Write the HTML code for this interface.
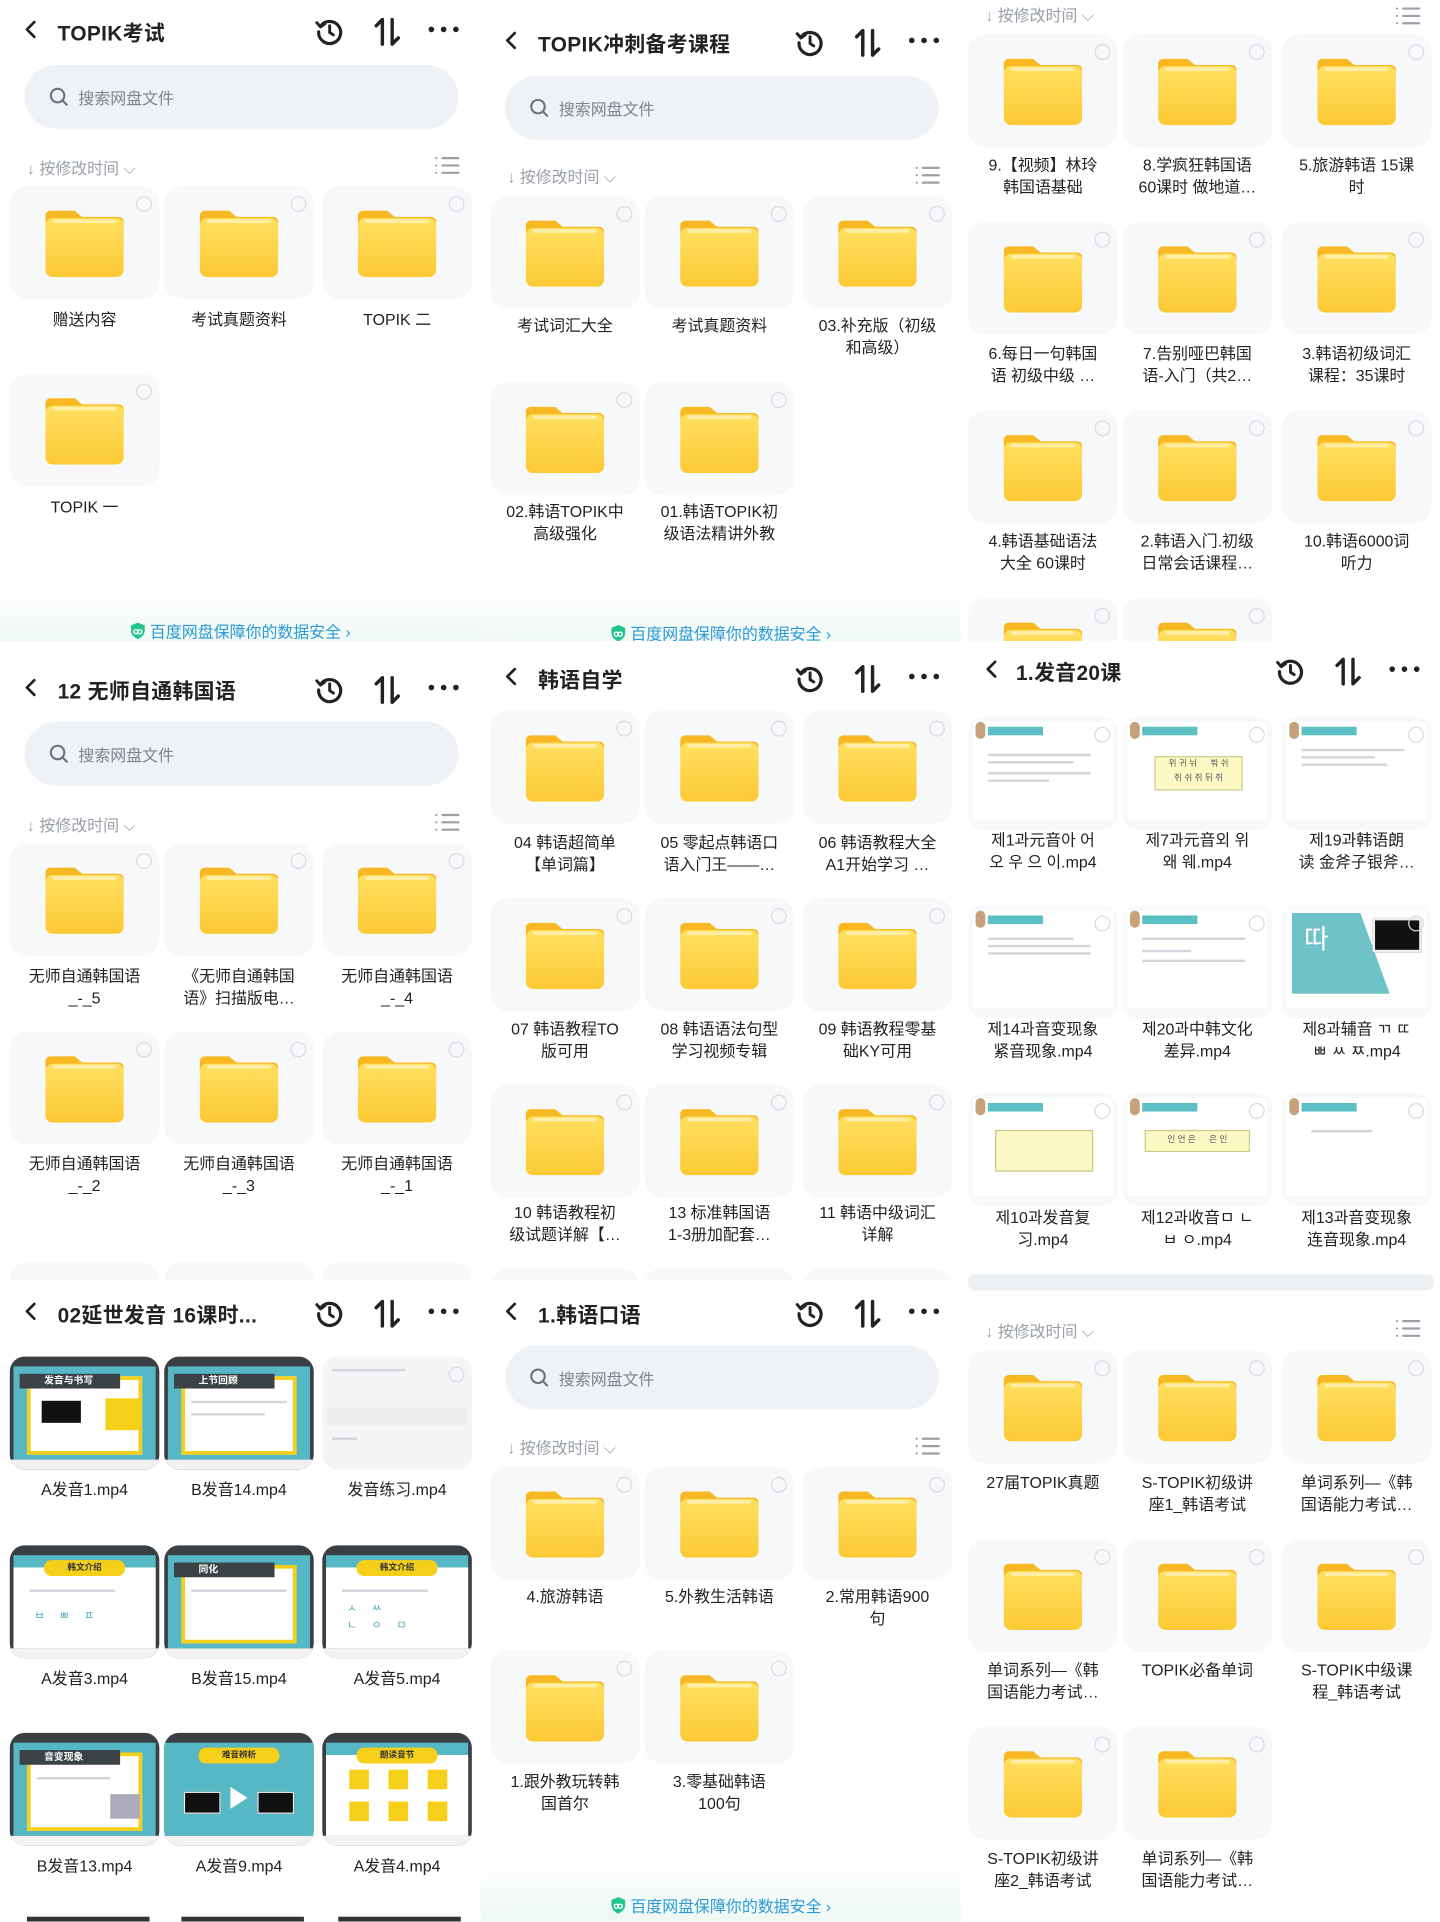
<!DOCTYPE html>
<html><head><meta charset="utf-8">
<style>
*{margin:0;padding:0;box-sizing:border-box}
html,body{width:1440px;height:1920px;overflow:hidden;background:#fff}
body{font-family:"Liberation Sans","Noto Sans CJK SC",sans-serif;color:#222}
#w{position:absolute;left:0;top:0;width:1175px;height:1567px;transform:scale(1.22553);transform-origin:0 0}
.p{position:absolute;width:392px;height:523px;overflow:hidden;background:#fff}
.a{position:absolute}
.hd{position:absolute;left:0;width:392px;height:30px}
.hd .bk{position:absolute;left:18px;top:6px}
.hd .tt{position:absolute;left:47px;top:3px;font-size:17px;font-weight:bold;color:#222;white-space:nowrap;letter-spacing:.3px}
.hd .i1{position:absolute;left:256px;top:3px}
.hd .i2{position:absolute;left:304px;top:3px}
.hd .i3{position:absolute;left:349px;top:11px}
.sr{position:absolute;left:20px;width:354px;height:52px;border-radius:26px;background:#eef1f5}
.sr svg{position:absolute;left:20px;top:18px}
.sr span{position:absolute;left:44px;top:17px;font-size:13px;color:#7d838c}
.so{position:absolute;left:22px;font-size:13px;color:#9aa0a8;white-space:nowrap}
.li{position:absolute;left:355px}
.t{position:absolute;width:122px;height:92px;border-radius:14px;background:#f6f8fa}
.t svg.f{position:absolute;left:29px;top:18px}
.t i{position:absolute;right:6px;top:8px;width:13px;height:13px;border:1.3px solid #d7dbe0;border-radius:50%}
.l{position:absolute;width:142px;text-align:center;font-size:13px;line-height:17.5px;color:#222}
.ft{position:absolute;left:0;width:392px;height:50px;background:linear-gradient(#fff,#eef8f3)}
.ft div{position:absolute;left:0;width:392px;text-align:center;font-size:13px;color:#2c9ad6;bottom:4px}
.v{position:absolute;width:122px;height:92px;border-radius:12px;background:#fff;overflow:hidden}
.v i{position:absolute;right:6px;top:8px;width:13px;height:13px;border:1.3px solid #d7dbe0;border-radius:50%}
.tag{position:absolute;left:16px;top:8px;width:45px;height:7px;background:#5cbfc4}
.av{position:absolute;left:6px;top:4px;width:8px;height:14px;border-radius:4px;background:#c7a17a}
.tx{position:absolute;height:2px;background:#d3d6dc}
.k{position:absolute;width:122px;height:92px;border-radius:12px;overflow:hidden;background:#3a3f44}
.k .in{position:absolute;left:3px;top:8px;right:3px;bottom:8px;background:#56b8c4}
.k .wh{position:absolute;left:14px;top:16px;right:14px;bottom:12px;background:#fff;border:3px solid #f6cf1a}
.k .bn{position:absolute;left:8px;top:14px;width:82px;height:12px;background:#3b4245;color:#fff;font-size:8px;font-weight:bold;padding-left:20px;line-height:12px}
.k .yb{position:absolute;left:28px;top:12px;width:66px;height:13px;background:#f6cf1a;border-radius:6px;color:#333;font-size:7px;font-weight:bold;text-align:center;line-height:13px}
.k .bot{position:absolute;left:0;right:0;bottom:0;height:8px;background:#f2f2f2}
</style></head><body>
<svg width="0" height="0" style="position:absolute">
<defs>
<linearGradient id="gf" x1="0" y1="0" x2="0" y2="1"><stop offset="0" stop-color="#ffe061"/><stop offset="1" stop-color="#fcc934"/></linearGradient>
<symbol id="fo" viewBox="0 0 64 56"><path d="M4 2h20l6 5h30a4 4 0 0 1 4 4v6H0V6a4 4 0 0 1 4-4z" fill="#f8b824"/><rect x="0" y="8" width="64" height="48" rx="6" fill="url(#gf)"/><rect x="6" y="9" width="52" height="3" rx="1.5" fill="#fff3b8" opacity=".8"/></symbol>
<symbol id="bk" viewBox="0 0 14 16"><path d="M10 2L4 8l6 6" stroke="#222" stroke-width="2.2" fill="none" stroke-linecap="round" stroke-linejoin="round"/></symbol>
<symbol id="hi" viewBox="0 0 26 26"><path d="M5.5 8.5A9 9 0 1 1 4 13" stroke="#222" stroke-width="2.6" fill="none" stroke-linecap="round"/><path d="M2.5 5.5l3 3.5 3.5-2.5" stroke="#222" stroke-width="2.4" fill="none" stroke-linecap="round" stroke-linejoin="round"/><path d="M13 8v5.5l3 2" stroke="#222" stroke-width="2.4" fill="none" stroke-linecap="round"/></symbol>
<symbol id="so" viewBox="0 0 24 26"><path d="M8 23V3L3 8" stroke="#222" stroke-width="2.8" fill="none" stroke-linecap="round" stroke-linejoin="round"/><path d="M16 3v20l5-5" stroke="#222" stroke-width="2.8" fill="none" stroke-linecap="round" stroke-linejoin="round"/></symbol>
<symbol id="dt" viewBox="0 0 26 6"><circle cx="3" cy="3" r="2.3" fill="#222"/><circle cx="13" cy="3" r="2.3" fill="#222"/><circle cx="23" cy="3" r="2.3" fill="#222"/></symbol>
<symbol id="sq" viewBox="0 0 16 16"><circle cx="7" cy="7" r="5.5" stroke="#6b717a" stroke-width="1.7" fill="none"/><path d="M11 11l3.5 3.5" stroke="#6b717a" stroke-width="1.7" stroke-linecap="round"/></symbol>
<symbol id="ls" viewBox="0 0 20 16"><g stroke="#9aa0a8" stroke-width="1.8" stroke-linecap="round"><path d="M1 2h0M6 2h13M1 8h0M6 8h13M1 14h0M6 14h13"/></g></symbol>
<symbol id="sh" viewBox="0 0 14 16"><path d="M7 1l6 2.5v4.5c0 3.5-2.7 6-6 7.5C3.7 14 1 11.5 1 8V3.5z" fill="#21c48a"/><circle cx="5.3" cy="9" r="1.8" fill="none" stroke="#fff" stroke-width="1.2"/><circle cx="8.7" cy="9" r="1.8" fill="none" stroke="#fff" stroke-width="1.2"/></symbol>
</defs></svg>

<div id="w">

<!-- Panel 1 -->
<div class="p" style="left:0;top:0">
 <div class="hd" style="top:10px"><svg class="bk" width="14" height="16"><use href="#bk"/></svg><div class="tt">TOPIK考试</div><svg class="i1" width="26" height="26"><use href="#hi"/></svg><svg class="i2" width="24" height="26"><use href="#so"/></svg><svg class="i3" width="26" height="6"><use href="#dt"/></svg></div>
 <div class="sr" style="top:53px"><svg width="16" height="16"><use href="#sq"/></svg><span>搜索网盘文件</span></div>
 <div class="so" style="top:127px">↓ 按修改时间 ⌵</div><svg class="li" style="top:127px" width="20" height="16"><use href="#ls"/></svg>
 <div class="t" style="left:8px;top:152px"><svg class="f" width="64" height="56"><use href="#fo"/></svg><i></i></div>
 <div class="t" style="left:134px;top:152px"><svg class="f" width="64" height="56"><use href="#fo"/></svg><i></i></div>
 <div class="t" style="left:263px;top:152px"><svg class="f" width="64" height="56"><use href="#fo"/></svg><i></i></div>
 <div class="l" style="left:-2px;top:252px">赠送内容</div>
 <div class="l" style="left:124px;top:252px">考试真题资料</div>
 <div class="l" style="left:253px;top:252px">TOPIK 二</div>
 <div class="t" style="left:8px;top:305px"><svg class="f" width="64" height="56"><use href="#fo"/></svg><i></i></div>
 <div class="l" style="left:-2px;top:405px">TOPIK 一</div>
 <div class="ft" style="top:478px"><div><svg width="13" height="15" style="vertical-align:-2px"><use href="#sh"/></svg> 百度网盘保障你的数据安全 ›</div></div>
</div>

<!-- Panel 2 -->
<div class="p" style="left:392px;top:0">
 <div class="hd" style="top:19px"><svg class="bk" width="14" height="16"><use href="#bk"/></svg><div class="tt">TOPIK冲刺备考课程</div><svg class="i1" width="26" height="26"><use href="#hi"/></svg><svg class="i2" width="24" height="26"><use href="#so"/></svg><svg class="i3" width="26" height="6"><use href="#dt"/></svg></div>
 <div class="sr" style="top:62px"><svg width="16" height="16"><use href="#sq"/></svg><span>搜索网盘文件</span></div>
 <div class="so" style="top:134px">↓ 按修改时间 ⌵</div><svg class="li" style="top:135px" width="20" height="16"><use href="#ls"/></svg>
 <div class="t" style="left:8px;top:160px"><svg class="f" width="64" height="56"><use href="#fo"/></svg><i></i></div>
 <div class="t" style="left:134px;top:160px"><svg class="f" width="64" height="56"><use href="#fo"/></svg><i></i></div>
 <div class="t" style="left:263px;top:160px"><svg class="f" width="64" height="56"><use href="#fo"/></svg><i></i></div>
 <div class="l" style="left:-2px;top:257px">考试词汇大全</div>
 <div class="l" style="left:124px;top:257px">考试真题资料</div>
 <div class="l" style="left:253px;top:257px">03.补充版（初级<br>和高级）</div>
 <div class="t" style="left:8px;top:312px"><svg class="f" width="64" height="56"><use href="#fo"/></svg><i></i></div>
 <div class="t" style="left:134px;top:312px"><svg class="f" width="64" height="56"><use href="#fo"/></svg><i></i></div>
 <div class="l" style="left:-2px;top:409px">02.韩语TOPIK中<br>高级强化</div>
 <div class="l" style="left:124px;top:409px">01.韩语TOPIK初<br>级语法精讲外教</div>
 <div class="ft" style="top:480px"><div><svg width="13" height="15" style="vertical-align:-2px"><use href="#sh"/></svg> 百度网盘保障你的数据安全 ›</div></div>
</div>

<!-- Panel 3 -->
<div class="p" style="left:784px;top:0;width:391px">
 <div class="so" style="top:2px;left:20px">↓ 按修改时间 ⌵</div><svg class="li" style="top:5px" width="20" height="16"><use href="#ls"/></svg>
 <div class="t" style="left:6px;top:28px"><svg class="f" width="64" height="56"><use href="#fo"/></svg><i></i></div>
 <div class="t" style="left:132px;top:28px"><svg class="f" width="64" height="56"><use href="#fo"/></svg><i></i></div>
 <div class="t" style="left:262px;top:28px"><svg class="f" width="64" height="56"><use href="#fo"/></svg><i></i></div>
 <div class="l" style="left:-4px;top:126px">9.【视频】林玲<br>韩国语基础</div>
 <div class="l" style="left:122px;top:126px">8.学疯狂韩国语<br>60课时 做地道…</div>
 <div class="l" style="left:252px;top:126px">5.旅游韩语 15课<br>时</div>
 <div class="t" style="left:6px;top:181px"><svg class="f" width="64" height="56"><use href="#fo"/></svg><i></i></div>
 <div class="t" style="left:132px;top:181px"><svg class="f" width="64" height="56"><use href="#fo"/></svg><i></i></div>
 <div class="t" style="left:262px;top:181px"><svg class="f" width="64" height="56"><use href="#fo"/></svg><i></i></div>
 <div class="l" style="left:-4px;top:280px">6.每日一句韩国<br>语 初级中级 …</div>
 <div class="l" style="left:122px;top:280px">7.告别哑巴韩国<br>语-入门（共2…</div>
 <div class="l" style="left:252px;top:280px">3.韩语初级词汇<br>课程：35课时</div>
 <div class="t" style="left:6px;top:335px"><svg class="f" width="64" height="56"><use href="#fo"/></svg><i></i></div>
 <div class="t" style="left:132px;top:335px"><svg class="f" width="64" height="56"><use href="#fo"/></svg><i></i></div>
 <div class="t" style="left:262px;top:335px"><svg class="f" width="64" height="56"><use href="#fo"/></svg><i></i></div>
 <div class="l" style="left:-4px;top:433px">4.韩语基础语法<br>大全 60课时</div>
 <div class="l" style="left:122px;top:433px">2.韩语入门.初级<br>日常会话课程…</div>
 <div class="l" style="left:252px;top:433px">10.韩语6000词<br>听力</div>
 <div class="t" style="left:6px;top:488px"><svg class="f" width="64" height="56"><use href="#fo"/></svg><i></i></div>
 <div class="t" style="left:132px;top:488px"><svg class="f" width="64" height="56"><use href="#fo"/></svg><i></i></div>
</div>

<!-- Panel 4 -->
<div class="p" style="left:0;top:523px">
 <div class="hd" style="top:24px"><svg class="bk" width="14" height="16"><use href="#bk"/></svg><div class="tt">12 无师自通韩国语</div><svg class="i1" width="26" height="26"><use href="#hi"/></svg><svg class="i2" width="24" height="26"><use href="#so"/></svg><svg class="i3" width="26" height="6"><use href="#dt"/></svg></div>
 <div class="sr" style="top:66px"><svg width="16" height="16"><use href="#sq"/></svg><span>搜索网盘文件</span></div>
 <div class="so" style="top:140px">↓ 按修改时间 ⌵</div><svg class="li" style="top:140px" width="20" height="16"><use href="#ls"/></svg>
 <div class="t" style="left:8px;top:165px"><svg class="f" width="64" height="56"><use href="#fo"/></svg><i></i></div>
 <div class="t" style="left:134px;top:165px"><svg class="f" width="64" height="56"><use href="#fo"/></svg><i></i></div>
 <div class="t" style="left:263px;top:165px"><svg class="f" width="64" height="56"><use href="#fo"/></svg><i></i></div>
 <div class="l" style="left:-2px;top:265px">无师自通韩国语<br>_-_5</div>
 <div class="l" style="left:124px;top:265px">《无师自通韩国<br>语》扫描版电…</div>
 <div class="l" style="left:253px;top:265px">无师自通韩国语<br>_-_4</div>
 <div class="t" style="left:8px;top:319px"><svg class="f" width="64" height="56"><use href="#fo"/></svg><i></i></div>
 <div class="t" style="left:134px;top:319px"><svg class="f" width="64" height="56"><use href="#fo"/></svg><i></i></div>
 <div class="t" style="left:263px;top:319px"><svg class="f" width="64" height="56"><use href="#fo"/></svg><i></i></div>
 <div class="l" style="left:-2px;top:418px">无师自通韩国语<br>_-_2</div>
 <div class="l" style="left:124px;top:418px">无师自通韩国语<br>_-_3</div>
 <div class="l" style="left:253px;top:418px">无师自通韩国语<br>_-_1</div>
 <div class="t" style="left:8px;top:507px"></div><div class="t" style="left:134px;top:507px"></div><div class="t" style="left:263px;top:507px"></div>
</div>

<!-- Panel 5 -->
<div class="p" style="left:392px;top:523px">
 <div class="hd" style="top:15px"><svg class="bk" width="14" height="16"><use href="#bk"/></svg><div class="tt">韩语自学</div><svg class="i1" width="26" height="26"><use href="#hi"/></svg><svg class="i2" width="24" height="26"><use href="#so"/></svg><svg class="i3" width="26" height="6"><use href="#dt"/></svg></div>
 <div class="t" style="left:8px;top:57px"><svg class="f" width="64" height="56"><use href="#fo"/></svg><i></i></div>
 <div class="t" style="left:134px;top:57px"><svg class="f" width="64" height="56"><use href="#fo"/></svg><i></i></div>
 <div class="t" style="left:263px;top:57px"><svg class="f" width="64" height="56"><use href="#fo"/></svg><i></i></div>
 <div class="l" style="left:-2px;top:156px">04 韩语超简单<br>【单词篇】</div>
 <div class="l" style="left:124px;top:156px">05 零起点韩语口<br>语入门王——…</div>
 <div class="l" style="left:253px;top:156px">06 韩语教程大全<br>A1开始学习 …</div>
 <div class="t" style="left:8px;top:210px"><svg class="f" width="64" height="56"><use href="#fo"/></svg><i></i></div>
 <div class="t" style="left:134px;top:210px"><svg class="f" width="64" height="56"><use href="#fo"/></svg><i></i></div>
 <div class="t" style="left:263px;top:210px"><svg class="f" width="64" height="56"><use href="#fo"/></svg><i></i></div>
 <div class="l" style="left:-2px;top:308px">07 韩语教程TO<br>版可用</div>
 <div class="l" style="left:124px;top:308px">08 韩语语法句型<br>学习视频专辑</div>
 <div class="l" style="left:253px;top:308px">09 韩语教程零基<br>础KY可用</div>
 <div class="t" style="left:8px;top:362px"><svg class="f" width="64" height="56"><use href="#fo"/></svg><i></i></div>
 <div class="t" style="left:134px;top:362px"><svg class="f" width="64" height="56"><use href="#fo"/></svg><i></i></div>
 <div class="t" style="left:263px;top:362px"><svg class="f" width="64" height="56"><use href="#fo"/></svg><i></i></div>
 <div class="l" style="left:-2px;top:458px">10 韩语教程初<br>级试题详解【…</div>
 <div class="l" style="left:124px;top:458px">13 标准韩国语<br>1-3册加配套…</div>
 <div class="l" style="left:253px;top:458px">11 韩语中级词汇<br>详解</div>
 <div class="t" style="left:8px;top:512px"></div><div class="t" style="left:134px;top:512px"></div><div class="t" style="left:263px;top:512px"></div>
</div>

<!-- Panel 6 -->
<div class="p" style="left:784px;top:523px;width:391px">
 <div class="hd" style="top:9px"><svg class="bk" width="14" height="16"><use href="#bk"/></svg><div class="tt" style="left:45px">1.发音20课</div><svg class="i1" width="26" height="26"><use href="#hi"/></svg><svg class="i2" width="24" height="26"><use href="#so"/></svg><svg class="i3" width="26" height="6"><use href="#dt"/></svg></div>
 <div class="v" style="left:6px;top:62px;background:#f7f8f9"><div class="a" style="left:4px;top:4px;right:4px;bottom:8px;background:#fff"></div><div class="av"></div><div class="tag"></div><div class="tx" style="left:16px;top:30px;width:84px"></div><div class="tx" style="left:16px;top:36px;width:70px"></div><div class="tx" style="left:16px;top:45px;width:84px"></div><div class="tx" style="left:16px;top:51px;width:50px"></div><i></i></div>
 <div class="v" style="left:132px;top:62px;background:#f7f8f9"><div class="a" style="left:4px;top:4px;right:4px;bottom:8px;background:#fff"></div><div class="av"></div><div class="tag"></div><div class="a" style="left:26px;top:32px;width:72px;height:28px;background:#fdf9c4;border:1px solid #c9c98a;font-size:7px;color:#555;text-align:center;line-height:12px">위 귀 뉘 　 붜 쉬<br>쥐 쉬 쥐 뒤 쥐</div><i></i></div>
 <div class="v" style="left:262px;top:62px;background:#f7f8f9"><div class="a" style="left:4px;top:4px;right:4px;bottom:8px;background:#fff"></div><div class="av"></div><div class="tag"></div><div class="tx" style="left:16px;top:26px;width:84px"></div><div class="tx" style="left:16px;top:32px;width:60px"></div><div class="tx" style="left:16px;top:38px;width:70px"></div><i></i></div>
 <div class="l" style="left:-4px;top:154px">제1과元音아 어<br>오 우 으 이.mp4</div>
 <div class="l" style="left:122px;top:154px">제7과元音외 위<br>왜 웨.mp4</div>
 <div class="l" style="left:252px;top:154px">제19과韩语朗<br>读 金斧子银斧…</div>
 <div class="v" style="left:6px;top:216px;background:#f7f8f9"><div class="a" style="left:4px;top:4px;right:4px;bottom:8px;background:#fff"></div><div class="av"></div><div class="tag"></div><div class="tx" style="left:16px;top:26px;width:70px"></div><div class="tx" style="left:16px;top:32px;width:84px"></div><div class="tx" style="left:16px;top:38px;width:84px"></div><i></i></div>
 <div class="v" style="left:132px;top:216px;background:#f7f8f9"><div class="a" style="left:4px;top:4px;right:4px;bottom:8px;background:#fff"></div><div class="av"></div><div class="tag"></div><div class="tx" style="left:16px;top:26px;width:84px"></div><div class="tx" style="left:16px;top:36px;width:40px"></div><div class="tx" style="left:16px;top:44px;width:84px"></div><i></i></div>
 <div class="v" style="left:262px;top:216px;background:#f7f8f9"><div class="a" style="left:4px;top:4px;right:4px;bottom:8px;background:#fff"></div><div class="a" style="left:8px;top:6px;width:80px;height:66px;background:#6fc3c8;clip-path:polygon(0 0,70% 0,100% 100%,0 100%);color:#fff;font-size:22px;padding:4px 0 0 10px">따</div><div class="a" style="left:74px;top:10px;width:40px;height:28px;background:#111;border:2px solid #eee"></div><i></i></div>
 <div class="l" style="left:-4px;top:308px">제14과音变现象<br>紧音现象.mp4</div>
 <div class="l" style="left:122px;top:308px">제20과中韩文化<br>差异.mp4</div>
 <div class="l" style="left:252px;top:308px">제8과辅音 ㄲ ㄸ<br>ㅃ ㅆ ㅉ.mp4</div>
 <div class="v" style="left:6px;top:369px;background:#f7f8f9"><div class="a" style="left:4px;top:4px;right:4px;bottom:8px;background:#fff"></div><div class="av"></div><div class="tag"></div><div class="a" style="left:22px;top:30px;width:80px;height:34px;background:#fdf9c4;border:1px solid #c9c98a"></div><i></i></div>
 <div class="v" style="left:132px;top:369px;background:#f7f8f9"><div class="a" style="left:4px;top:4px;right:4px;bottom:8px;background:#fff"></div><div class="av"></div><div class="tag"></div><div class="a" style="left:18px;top:30px;width:86px;height:18px;background:#fdf9c4;border:1px solid #c9c98a;font-size:7px;color:#555;text-align:center;line-height:16px">인 언 은 　 은 인</div><i></i></div>
 <div class="v" style="left:262px;top:369px;background:#f7f8f9"><div class="a" style="left:4px;top:4px;right:4px;bottom:8px;background:#fff"></div><div class="av"></div><div class="tag"></div><div class="tx" style="left:24px;top:30px;width:50px"></div><i></i></div>
 <div class="l" style="left:-4px;top:462px">제10과发音复<br>习.mp4</div>
 <div class="l" style="left:122px;top:462px">제12과收音ㅁ ㄴ<br>ㅂ ㅇ.mp4</div>
 <div class="l" style="left:252px;top:462px">제13과音变现象<br>连音现象.mp4</div>
 <div class="a" style="left:6px;top:517px;width:380px;height:8px;background:#eceff2;border-radius:6px"></div>
</div>

<!-- Panel 7 -->
<div class="p" style="left:0;top:1045px">
 <div class="hd" style="top:11px"><svg class="bk" width="14" height="16"><use href="#bk"/></svg><div class="tt">02延世发音 16课时...</div><svg class="i1" width="26" height="26"><use href="#hi"/></svg><svg class="i2" width="24" height="26"><use href="#so"/></svg><svg class="i3" width="26" height="6"><use href="#dt"/></svg></div>
 <div class="k" style="left:8px;top:62px"><div class="in"></div><div class="wh"></div><div class="bn">发音与书写</div><div class="a" style="left:26px;top:36px;width:32px;height:18px;background:#111"></div><div class="a" style="left:78px;top:34px;width:28px;height:26px;background:#f6cf1a"></div><div class="bot"></div></div>
 <div class="k" style="left:134px;top:62px"><div class="in"></div><div class="wh"></div><div class="bn">上节回顾</div><div class="tx" style="left:22px;top:36px;width:78px"></div><div class="tx" style="left:22px;top:46px;width:60px"></div><div class="bot"></div></div>
 <div class="v" style="left:263px;top:62px;background:#f4f5f7"><div class="tx" style="left:8px;top:10px;width:60px"></div><div class="a" style="left:4px;top:42px;right:4px;height:14px;background:#eceef0"></div><div class="tx" style="left:8px;top:66px;width:20px"></div><i></i></div>
 <div class="l" style="left:-2px;top:162px">A发音1.mp4</div>
 <div class="l" style="left:124px;top:162px">B发音14.mp4</div>
 <div class="l" style="left:253px;top:162px">发音练习.mp4</div>
 <div class="k" style="left:8px;top:216px"><div class="in"></div><div class="a" style="left:3px;top:18px;right:3px;bottom:8px;background:#fff"></div><div class="yb">韩文介绍</div><div class="tx" style="left:16px;top:36px;width:70px"></div><div class="a" style="left:20px;top:50px;font-size:9px;color:#4aa8c0;letter-spacing:12px">ㅂㅃㅍ</div><div class="bot"></div></div>
 <div class="k" style="left:134px;top:216px"><div class="in"></div><div class="wh"></div><div class="bn">同化</div><div class="tx" style="left:22px;top:36px;width:78px"></div><div class="bot"></div></div>
 <div class="k" style="left:263px;top:216px"><div class="in"></div><div class="a" style="left:3px;top:18px;right:3px;bottom:8px;background:#fff"></div><div class="yb">韩文介绍</div><div class="tx" style="left:16px;top:36px;width:70px"></div><div class="a" style="left:20px;top:44px;font-size:9px;color:#4aa8c0;letter-spacing:12px;line-height:14px">ㅅㅆ<br>ㄴㅇㅁ</div><div class="bot"></div></div>
 <div class="l" style="left:-2px;top:316px">A发音3.mp4</div>
 <div class="l" style="left:124px;top:316px">B发音15.mp4</div>
 <div class="l" style="left:253px;top:316px">A发音5.mp4</div>
 <div class="k" style="left:8px;top:369px"><div class="in"></div><div class="wh"></div><div class="bn">音变现象</div><div class="tx" style="left:22px;top:36px;width:60px"></div><div class="a" style="left:82px;top:50px;width:24px;height:20px;background:#aab"></div><div class="bot"></div></div>
 <div class="k" style="left:134px;top:369px"><div class="in" style="left:0;right:0"></div><div class="yb">难音辨析</div><div class="a" style="left:16px;top:48px;width:30px;height:18px;background:#111;border:1px solid #eee"></div><div class="a" style="left:76px;top:48px;width:30px;height:18px;background:#111;border:1px solid #eee"></div><div class="a" style="left:54px;top:44px;width:0;height:0;border-left:14px solid #fff;border-top:9px solid transparent;border-bottom:9px solid transparent"></div><div class="bot"></div></div>
 <div class="k" style="left:263px;top:369px"><div class="in"></div><div class="a" style="left:3px;top:18px;right:3px;bottom:8px;background:#fff"></div><div class="yb">朗读音节</div><div class="a" style="left:22px;top:30px;width:16px;height:16px;background:#f6cf1a"></div><div class="a" style="left:54px;top:30px;width:16px;height:16px;background:#f6cf1a"></div><div class="a" style="left:86px;top:30px;width:16px;height:16px;background:#f6cf1a"></div><div class="a" style="left:22px;top:56px;width:16px;height:16px;background:#f6cf1a"></div><div class="a" style="left:54px;top:56px;width:16px;height:16px;background:#f6cf1a"></div><div class="a" style="left:86px;top:56px;width:16px;height:16px;background:#f6cf1a"></div><div class="bot"></div></div>
 <div class="l" style="left:-2px;top:469px">B发音13.mp4</div>
 <div class="l" style="left:124px;top:469px">A发音9.mp4</div>
 <div class="l" style="left:253px;top:469px">A发音4.mp4</div>
 <div class="a" style="left:22px;top:519px;width:100px;height:4px;background:#333"></div><div class="a" style="left:148px;top:519px;width:100px;height:4px;background:#333"></div><div class="a" style="left:276px;top:519px;width:100px;height:4px;background:#333"></div>
</div>

<!-- Panel 8 -->
<div class="p" style="left:392px;top:1045px">
 <div class="hd" style="top:11px"><svg class="bk" width="14" height="16"><use href="#bk"/></svg><div class="tt">1.韩语口语</div><svg class="i1" width="26" height="26"><use href="#hi"/></svg><svg class="i2" width="24" height="26"><use href="#so"/></svg><svg class="i3" width="26" height="6"><use href="#dt"/></svg></div>
 <div class="sr" style="top:53px"><svg width="16" height="16"><use href="#sq"/></svg><span>搜索网盘文件</span></div>
 <div class="so" style="top:126px">↓ 按修改时间 ⌵</div><svg class="li" style="top:127px" width="20" height="16"><use href="#ls"/></svg>
 <div class="t" style="left:8px;top:152px"><svg class="f" width="64" height="56"><use href="#fo"/></svg><i></i></div>
 <div class="t" style="left:134px;top:152px"><svg class="f" width="64" height="56"><use href="#fo"/></svg><i></i></div>
 <div class="t" style="left:263px;top:152px"><svg class="f" width="64" height="56"><use href="#fo"/></svg><i></i></div>
 <div class="l" style="left:-2px;top:249px">4.旅游韩语</div>
 <div class="l" style="left:124px;top:249px">5.外教生活韩语</div>
 <div class="l" style="left:253px;top:249px">2.常用韩语900<br>句</div>
 <div class="t" style="left:8px;top:302px"><svg class="f" width="64" height="56"><use href="#fo"/></svg><i></i></div>
 <div class="t" style="left:134px;top:302px"><svg class="f" width="64" height="56"><use href="#fo"/></svg><i></i></div>
 <div class="l" style="left:-2px;top:400px">1.跟外教玩转韩<br>国首尔</div>
 <div class="l" style="left:124px;top:400px">3.零基础韩语<br>100句</div>
 <div class="ft" style="top:473px"><div><svg width="13" height="15" style="vertical-align:-2px"><use href="#sh"/></svg> 百度网盘保障你的数据安全 ›</div></div>
</div>

<!-- Panel 9 -->
<div class="p" style="left:784px;top:1045px;width:391px">
 <div class="a" style="left:6px;top:0;width:380px;height:8px;background:#eceff2;border-radius:0 0 6px 6px"></div>
 <div class="so" style="top:31px;left:20px">↓ 按修改时间 ⌵</div><svg class="li" style="top:31px" width="20" height="16"><use href="#ls"/></svg>
 <div class="t" style="left:6px;top:57px"><svg class="f" width="64" height="56"><use href="#fo"/></svg><i></i></div>
 <div class="t" style="left:132px;top:57px"><svg class="f" width="64" height="56"><use href="#fo"/></svg><i></i></div>
 <div class="t" style="left:262px;top:57px"><svg class="f" width="64" height="56"><use href="#fo"/></svg><i></i></div>
 <div class="l" style="left:-4px;top:156px">27届TOPIK真题</div>
 <div class="l" style="left:122px;top:156px">S-TOPIK初级讲<br>座1_韩语考试</div>
 <div class="l" style="left:252px;top:156px">单词系列—《韩<br>国语能力考试…</div>
 <div class="t" style="left:6px;top:211px"><svg class="f" width="64" height="56"><use href="#fo"/></svg><i></i></div>
 <div class="t" style="left:132px;top:211px"><svg class="f" width="64" height="56"><use href="#fo"/></svg><i></i></div>
 <div class="t" style="left:262px;top:211px"><svg class="f" width="64" height="56"><use href="#fo"/></svg><i></i></div>
 <div class="l" style="left:-4px;top:309px">单词系列—《韩<br>国语能力考试…</div>
 <div class="l" style="left:122px;top:309px">TOPIK必备单词</div>
 <div class="l" style="left:252px;top:309px">S-TOPIK中级课<br>程_韩语考试</div>
 <div class="t" style="left:6px;top:364px"><svg class="f" width="64" height="56"><use href="#fo"/></svg><i></i></div>
 <div class="t" style="left:132px;top:364px"><svg class="f" width="64" height="56"><use href="#fo"/></svg><i></i></div>
 <div class="l" style="left:-4px;top:463px">S-TOPIK初级讲<br>座2_韩语考试</div>
 <div class="l" style="left:122px;top:463px">单词系列—《韩<br>国语能力考试…</div>
</div>

</div>
</body></html>
